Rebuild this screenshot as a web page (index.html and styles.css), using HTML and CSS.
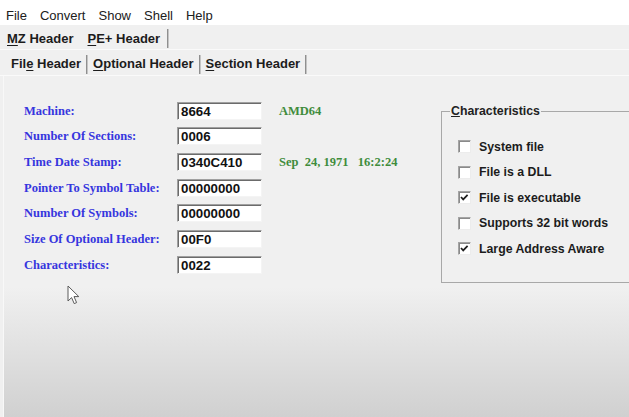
FILE: index.html
```html
<!DOCTYPE html>
<html lang="en">
<head>
<meta charset="utf-8">
<title>PE Viewer</title>
<link rel="stylesheet" href="styles.css">
</head>
<body>
<div class="window">
  <nav class="menubar">
    <span class="menu-item">File</span>
    <span class="menu-item">Convert</span>
    <span class="menu-item">Show</span>
    <span class="menu-item">Shell</span>
    <span class="menu-item">Help</span>
  </nav>

  <div class="tabrow tabrow-top">
    <span class="tab"><u>M</u>Z Header</span>
    <span class="tab tab-active"><u>P</u>E+ Header</span>
    <span class="sep"></span>
  </div>

  <div class="tabrow tabrow-sub">
    <span class="tab tab-active">Fil<u>e</u> Header</span>
    <span class="sep"></span>
    <span class="tab"><u>O</u>ptional Header</span>
    <span class="sep"></span>
    <span class="tab"><u>S</u>ection Header</span>
    <span class="sep"></span>
  </div>

  <main class="panel">
    <div class="fields">
      <span class="label">Machine:</span>
      <span class="value">8664</span>
      <span class="note">AMD64</span>

      <span class="label">Number Of Sections:</span>
      <span class="value">0006</span>
      <span class="note"></span>

      <span class="label">Time Date Stamp:</span>
      <span class="value">0340C410</span>
      <span class="note">Sep  24, 1971   16:2:24</span>

      <span class="label">Pointer To Symbol Table:</span>
      <span class="value">00000000</span>
      <span class="note"></span>

      <span class="label">Number Of Symbols:</span>
      <span class="value">00000000</span>
      <span class="note"></span>

      <span class="label">Size Of Optional Header:</span>
      <span class="value">00F0</span>
      <span class="note"></span>

      <span class="label">Characteristics:</span>
      <span class="value">0022</span>
      <span class="note"></span>
    </div>

    <div class="group-clip">
      <fieldset class="group">
        <legend class="group-title"><u>C</u>haracteristics</legend>
        <div class="check-row"><span class="box"></span><span class="check-label">System file</span></div>
        <div class="check-row"><span class="box"></span><span class="check-label">File is a DLL</span></div>
        <div class="check-row"><span class="box checked"><svg viewBox="0 0 11 11" width="11" height="11"><polyline points="2,5 4.2,7.4 8.6,2.8" fill="none" stroke="#1e1e1e" stroke-width="1.7"/></svg></span><span class="check-label">File is executable</span></div>
        <div class="check-row"><span class="box"></span><span class="check-label">Supports 32 bit words</span></div>
        <div class="check-row"><span class="box checked"><svg viewBox="0 0 11 11" width="11" height="11"><polyline points="2,5 4.2,7.4 8.6,2.8" fill="none" stroke="#1e1e1e" stroke-width="1.7"/></svg></span><span class="check-label">Large Address Aware</span></div>
      </fieldset>
    </div>

    <svg class="pointer" width="14" height="21" viewBox="0 0 14 21">
      <path d="M1 1 L1 16 L4.6 12.6 L7.2 18.6 L9.6 17.6 L7 11.6 L11.8 11.6 Z" fill="#ffffff" stroke="#5a5a5a" stroke-width="1" stroke-linejoin="round"/>
    </svg>
  </main>
</div>
</body>
</html>
```

FILE: styles.css
```css
html, body {
  margin: 0;
  padding: 0;
}

body {
  width: 629px;
  height: 417px;
  overflow: hidden;
  background: #f0f0f0;
  font-family: "Liberation Sans", Arial, sans-serif;
  color: #1a1a1a;
}

.window {
  display: flex;
  flex-direction: column;
  height: 417px;
}

/* menu bar */
.menubar {
  height: 25px;
  box-sizing: border-box;
  background: #ffffff;
  display: flex;
  gap: 13px;
  padding: 8px 0 0 6px;
  font-size: 13px;
  line-height: 16px;
  color: #202020;
}

/* flat button-style tab strips */
.tabrow {
  display: flex;
  align-items: flex-start;
  box-sizing: border-box;
  border-bottom: 1px solid #fafafa;
  font-size: 13px;
  font-weight: bold;
  line-height: 16px;
  color: #1c1c1c;
}

.tabrow-top {
  height: 25px;
  padding-top: 6px;
}

.tabrow-top .tab {
  padding: 0 7px;
}

.tabrow-top .sep {
  margin-top: -2px;
}

.tabrow-sub {
  height: 26px;
  padding: 6px 0 0 6px;
}

.tabrow-sub .tab {
  padding: 0 5px;
}

.tabrow-sub .sep {
  margin-top: -1px;
}

.tab u {
  text-decoration-thickness: 1px;
  text-underline-offset: 2px;
}

.sep {
  width: 1px;
  height: 19px;
  background: #8f8f8f;
  border-right: 1px solid #c4c4c4;
}

/* client area */
.panel {
  position: relative;
  flex: 1;
  display: flex;
  align-items: flex-start;
  background: linear-gradient(#f0f0f0 0%, #f0f0f0 62%, #d0d0d0 100%);
  box-shadow: inset 3px 0 0 #f0f0f0, inset 4px 0 0 #f8f8f8;
}

.fields {
  flex: 0 0 441px;
  box-sizing: border-box;
  padding: 22px 0 0 24px;
  display: grid;
  grid-template-columns: 153px 85px auto;
  grid-auto-rows: 25.67px;
  align-items: center;
}

.label {
  font-family: "Liberation Serif", "Times New Roman", serif;
  font-weight: bold;
  font-size: 12.5px;
  line-height: 16px;
  color: #3636de;
}

.value {
  height: 18px;
  box-sizing: border-box;
  background: #ffffff;
  border: 1px solid;
  border-color: #a0a0a0 #f4f4f4 #f4f4f4 #a0a0a0;
  box-shadow: inset 1px 1px 0 #6b6b6b;
  padding: 1px 3px 0;
  font-size: 13.3px;
  font-weight: bold;
  line-height: 16px;
  color: #111;
}

.note {
  padding-left: 17px;
  white-space: pre;
  font-family: "Liberation Serif", "Times New Roman", serif;
  font-weight: bold;
  font-size: 12.5px;
  line-height: 16px;
  color: #3f8c3c;
}

/* characteristics group box; its right side continues past the window edge */
.group-clip {
  flex: 1 1 auto;
  min-width: 0;
  overflow: hidden;
}

.group {
  width: 230px;
  margin: 27px 0 0 0;
  padding: 15px 0 20px 16px;
  border: 1px solid #a8a8a8;
  min-width: 0;
}

.group-title {
  margin-left: -8px;
  padding: 0 1px;
  font-size: 12.3px;
  font-weight: bold;
  line-height: 16px;
  color: #222;
}

.check-row {
  height: 25.5px;
  display: flex;
  align-items: center;
  gap: 8px;
}

.box {
  width: 13px;
  height: 13px;
  box-sizing: border-box;
  background: #ffffff;
  border: 1px solid;
  border-color: #a4a4a4 #ececec #ececec #a4a4a4;
  box-shadow: inset 1px 1px 0 #8a8a8a;
  display: flex;
  align-items: flex-end;
  justify-content: center;
}

.box svg {
  display: block;
}

.check-label {
  font-size: 12.3px;
  font-weight: bold;
  line-height: 16px;
  color: #1c1c1c;
}

/* mouse pointer resting over the form */
.pointer {
  position: absolute;
  left: 67px;
  top: 209px;
}
```
